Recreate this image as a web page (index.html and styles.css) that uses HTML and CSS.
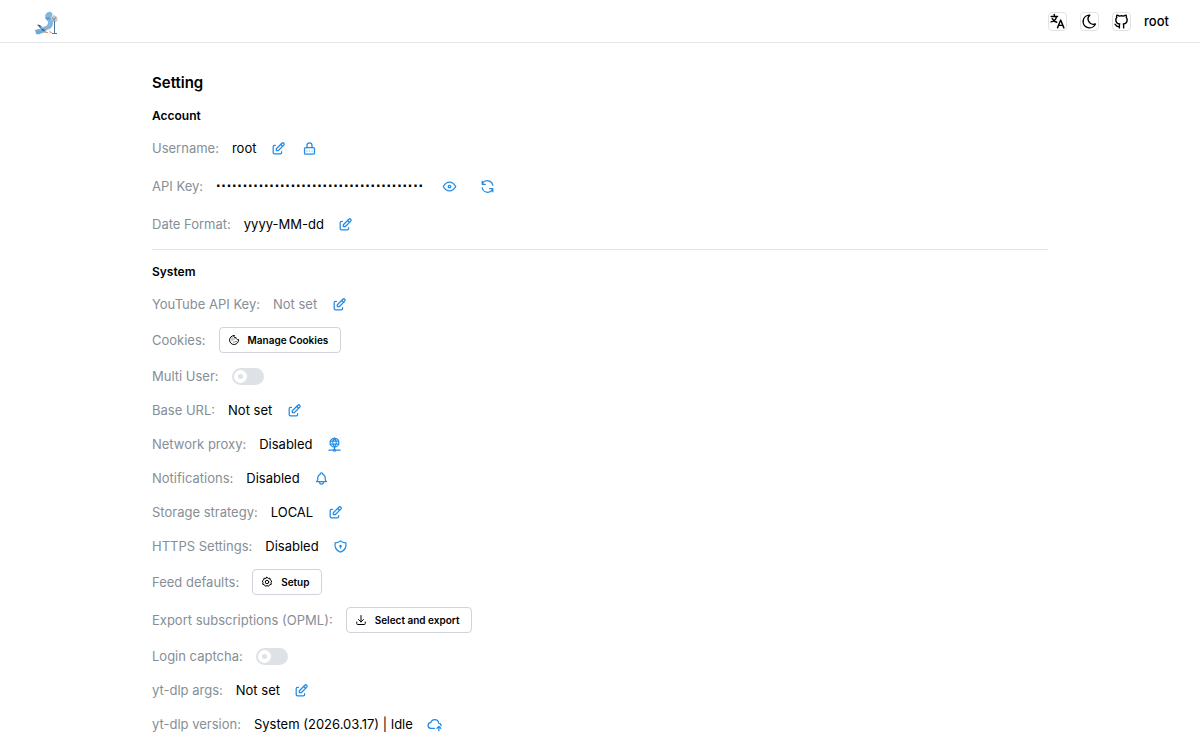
FILE: index.html
```html
<!DOCTYPE html>
<html lang="en">
<head>
<meta charset="utf-8">
<title>Setting</title>
<link rel="stylesheet" href="styles.css">
</head>
<body>
<svg class="sprite" aria-hidden="true">
  <symbol id="edit" viewBox="0 0 24 24"><path d="M7 7H5.500a2 2 0 0 0-2 2v9.500a2 2 0 0 0 2 2H15a2 2 0 0 0 2-2V17"/><path d="M20.400 6.600a2.100 2.100 0 0 0-3-3L8.500 12.500V15.500h3z"/><path d="M15.500 5.500l3 3"/></symbol>
  <symbol id="lock" viewBox="0 0 24 24"><rect x="4" y="10.500" width="16" height="10.500" rx="2"/><path d="M8 10.500V7a4 4 0 0 1 8 0v3.500"/><path d="M8 16h.1M12 16h.1M16 16h.1" stroke-width="1.500"/></symbol>
  <symbol id="eye" viewBox="0 0 24 24"><circle cx="12" cy="12" r="2"/><path d="M22 12c-2.700 4.700-6 7-10 7s-7.300-2.300-10-7c2.700-4.700 6-7 10-7s7.300 2.300 10 7z"/></symbol>
  <symbol id="refresh" viewBox="0 0 24 24"><path d="M20.500 10a9 9 0 0 0-16.500-3M3.500 3.500v5h5M3.500 14a9 9 0 0 0 16.500 3M20.500 20.500v-5h-5"/></symbol>
  <symbol id="globe" viewBox="0 0 24 24"><circle cx="12" cy="9" r="7"/><path d="M5.500 6.500h13M5.500 11.500h13M12 2c-3.500 4-3.500 10 0 14M12 2c3.500 4 3.500 10 0 14M12 16v4M3 21h7M14 21h7"/><circle cx="12" cy="21" r="1.500"/></symbol>
  <symbol id="bell" viewBox="0 0 24 24"><path d="M10 5a2 2 0 1 1 4 0a7 7 0 0 1 4 6v3a4 4 0 0 0 2 3H4a4 4 0 0 0 2-3v-3a7 7 0 0 1 4-6M9 17v1a3 3 0 0 0 6 0v-1"/></symbol>
  <symbol id="shield" viewBox="0 0 24 24"><path d="M12 3a12 12 0 0 0 8.500 3c1.200 6.500-1.500 12.500-8.500 15c-7-2.500-9.700-8.500-8.500-15a12 12 0 0 0 8.500-3z"/><circle cx="12" cy="11" r="1"/><path d="M12 12v2.500"/></symbol>
  <symbol id="cloud" viewBox="0 0 24 24"><path d="M12 18H6.500a4.500 4.500 0 0 1-.5-9c.8-3 3.200-5 6-5c3.800 0 6.500 2.500 6.700 6a4 4 0 0 1 3.800 4M19 22v-7M16 18l3-3l3 3"/></symbol>
  <symbol id="cookie" viewBox="0 0 24 24"><path d="M12 3a3 3 0 0 0 4 4a4 4 0 0 0 5 4a9 9 0 1 1-9-8zM8 12h.1M12 16h.1M12 10h.1M16 15h.1M8 8h.1"/></symbol>
  <symbol id="gear" viewBox="0 0 24 24"><path d="M12 2.500l2.600 2.300 3.500-.3.500 3.500 2.900 2-1.500 3 .6 3.500-3.400 1.100-2 2.900-3.200-1.300-3.200 1.300-2-2.900-3.400-1.100.6-3.500-1.500-3 2.900-2 .5-3.500 3.500.3z"/><circle cx="12" cy="12" r="3.500"/></symbol>
  <symbol id="download" viewBox="0 0 24 24"><path d="M3.500 16v3a2 2 0 0 0 2 2h13a2 2 0 0 0 2-2v-3M7 11l5 5 5-5M12 3v13"/></symbol>
  <symbol id="language" viewBox="0 0 24 24"><path d="M3 5h9M7.500 2v3M10.500 5c-.5 4-3.500 6.500-7.500 7.500M4.500 8c1.500 3 4 4.500 6.500 5M12 21l4.500-11 4.500 11M13.700 17.500h5.600"/></symbol>
  <symbol id="moon" viewBox="0 0 24 24"><path d="M12 3h.4a7.500 7.500 0 0 0 7.900 12.400A9 9 0 1 1 12 3z"/></symbol>
  <symbol id="github" viewBox="0 0 24 24"><path d="M9 19c-4.300 1.400-4.300-2.500-6-3m12 5v-3.500c0-1 .1-1.400-.5-2c2.800-.3 5.500-1.400 5.500-6a4.600 4.600 0 0 0-1.300-3.200a4.200 4.200 0 0 0-.1-3.200s-1.100-.3-3.500 1.300a12.300 12.300 0 0 0-6.200 0C6.500 2.800 5.400 3.100 5.400 3.100a4.200 4.200 0 0 0-.1 3.200A4.600 4.600 0 0 0 4 9.500c0 4.600 2.700 5.700 5.500 6c-.6.600-.6 1.200-.5 2V21"/></symbol>
</svg>

<header class="topbar">
  <a class="logo" href="#" aria-label="Home">
    <svg viewBox="0 0 32 30" width="32" height="30">
      <path d="M5 22l4-1 5 1 3 2-5 1-3 1.500-3-.5z" fill="#6fabd8"/>
      <path d="M7 16.500l3 .5 3 3 4 2-4 1-3-3z" fill="#2d5c92"/>
      <path d="M15.500 10c-1-2 0-5 3-6 2-.5 4 .5 4 2.500l-1 2.500c2 3 2.500 8-.5 11-2 2-6 2.500-9.500.5l-2-2c4 1 7.500 0 8.500-3 .5-2-1-3-2.500-5.500z" fill="#82b6dc"/>
      <path d="M15 10l4-1 1 2-3 1z" fill="#5799cc"/>
      <path d="M21 9l3-2 3 2 .5 4-3 1.500-3-2z" fill="#c3c7cc"/>
      <path d="M22 10l3 2m1-3l-3 4" stroke="#858e98" fill="none"/>
      <path d="M16 22.500l-1 2h3M20 22.500v2h2" stroke="#e8a070" fill="none"/>
      <path d="M24.500 13v12M22 25.500h5" stroke="#4378ad" fill="none"/>
    </svg>
  </a>
  <nav class="tools">
    <button class="tool" aria-label="Language"><svg class="icon bold"><use href="#language"/></svg></button>
    <button class="tool" aria-label="Dark mode"><svg class="icon bold"><use href="#moon"/></svg></button>
    <a class="tool" href="#" aria-label="GitHub"><svg class="icon bold"><use href="#github"/></svg></a>
    <button class="user">root</button>
  </nav>
</header>

<main class="page">
  <h1>Setting</h1>
  <section class="group account">
    <h2>Account</h2>
    <div class="row"><span class="label">Username:</span><span>root</span><button class="action" aria-label="Edit username"><svg class="icon"><use href="#edit"/></svg></button><button class="action" aria-label="Change password"><svg class="icon"><use href="#lock"/></svg></button></div>
    <div class="row"><span class="label">API Key:</span><span class="secret">·······································</span><span class="actions"><button class="action" aria-label="Show key"><svg class="icon"><use href="#eye"/></svg></button><button class="action" aria-label="Regenerate key"><svg class="icon"><use href="#refresh"/></svg></button></span></div>
    <div class="row"><span class="label">Date Format:</span><span>yyyy-MM-dd</span><button class="action" aria-label="Edit date format"><svg class="icon"><use href="#edit"/></svg></button></div>
  </section>
  <hr>
  <section class="group system">
    <h2>System</h2>
    <div class="row"><span class="label">YouTube API Key:</span><span class="label">Not set</span><button class="action" aria-label="Edit YouTube API key"><svg class="icon"><use href="#edit"/></svg></button></div>
    <div class="row"><span class="label">Cookies:</span><button class="button"><svg class="icon small"><use href="#cookie"/></svg>Manage Cookies</button></div>
    <div class="row"><label class="label" for="multi">Multi User:</label><input class="switch" id="multi" type="checkbox" role="switch"></div>
    <div class="row"><span class="label">Base URL:</span><span>Not set</span><button class="action" aria-label="Edit base URL"><svg class="icon"><use href="#edit"/></svg></button></div>
    <div class="row"><span class="label">Network proxy:</span><span>Disabled</span><button class="action" aria-label="Edit proxy"><svg class="icon"><use href="#globe"/></svg></button></div>
    <div class="row"><span class="label">Notifications:</span><span>Disabled</span><button class="action" aria-label="Edit notifications"><svg class="icon"><use href="#bell"/></svg></button></div>
    <div class="row"><span class="label">Storage strategy:</span><span>LOCAL</span><button class="action" aria-label="Edit storage"><svg class="icon"><use href="#edit"/></svg></button></div>
    <div class="row"><span class="label">HTTPS Settings:</span><span>Disabled</span><button class="action" aria-label="Edit HTTPS"><svg class="icon"><use href="#shield"/></svg></button></div>
    <div class="row"><span class="label">Feed defaults:</span><button class="button"><svg class="icon small"><use href="#gear"/></svg>Setup</button></div>
    <div class="row"><span class="label">Export subscriptions (OPML):</span><button class="button"><svg class="icon small"><use href="#download"/></svg>Select and export</button></div>
    <div class="row"><label class="label" for="captcha">Login captcha:</label><input class="switch" id="captcha" type="checkbox" role="switch"></div>
    <div class="row"><span class="label">yt-dlp args:</span><span>Not set</span><button class="action" aria-label="Edit arguments"><svg class="icon"><use href="#edit"/></svg></button></div>
    <div class="row"><span class="label">yt-dlp version:</span><span>System (2026.03.17) | Idle</span><button class="action" aria-label="Update yt-dlp"><svg class="icon"><use href="#cloud"/></svg></button></div>
  </section>
</main>
</body>
</html>
```
FILE: styles.css
```css
*, *::before { box-sizing: border-box; }
body { margin: 0; background: #fff; color: #000; font: 13px/22px Inter, "Liberation Sans", sans-serif; }
button { margin: 0; padding: 0; border: 0; background: none; color: inherit; font: inherit; cursor: pointer; }
.sprite { display: none; }
.icon { display: block; width: 15px; height: 15px; fill: none; stroke: currentColor; stroke-width: 2; stroke-linecap: round; stroke-linejoin: round; }
.small { width: 12px; height: 12px; }
.bold { width: 17px; height: 17px; flex: none; }
.topbar { display: flex; align-items: center; justify-content: space-between; height: 43px; padding: 0 31px 0 30px; border-bottom: 1px solid #e3e6e8; }
.logo { display: flex; padding-top: 3px; }
.tools { display: flex; align-items: center; gap: 13px; }
.tool { display: flex; align-items: center; justify-content: center; width: 19px; height: 19px; border: 1px solid #dfe3e6; border-radius: 4px; color: #000; }
.user { font-weight: 500; }
.page { max-width: 896px; margin: 0 auto; padding: 29px 0 12px; }
h1 { margin: 0 0 12px; font-size: 15px; font-weight: 600; line-height: 22px; }
h2 { margin: 0; font-size: 12px; font-weight: 600; line-height: 20px; }
.group { display: flex; flex-direction: column; gap: 12px; }
.account { gap: 16px; }
.account h2 { margin-bottom: -5px; }
.system h2 { margin-bottom: -1px; }
hr { margin: 14px 0 12px; border: 0; border-top: 1px solid #e1e4e7; }
.row { display: flex; align-items: center; gap: 13px; }
.label { color: #868e96; }
.secret { font-family: "Liberation Sans", sans-serif; font-size: 16px; font-weight: 700; }
.action { display: flex; align-items: center; justify-content: center; width: 18px; height: 18px; color: #228be6; }
.actions { display: flex; gap: 20px; margin-left: 4px; }
.button { display: flex; align-items: center; gap: 8px; height: 26px; padding: 0 12px 0 8px; border: 1px solid #ced4da; border-radius: 4px; font-size: 10px; font-weight: 600; line-height: 16px; }
.switch { appearance: none; display: flex; align-items: center; width: 32px; height: 17px; margin: 0; padding: 0 2px; border-radius: 9px; background: #dee2e6; cursor: pointer; }
.switch::before { content: ""; width: 13px; height: 13px; border: 4px solid #fff; border-radius: 50%; background: #dee2e6; }
.switch:checked { justify-content: flex-end; background: #228be6; }
```
